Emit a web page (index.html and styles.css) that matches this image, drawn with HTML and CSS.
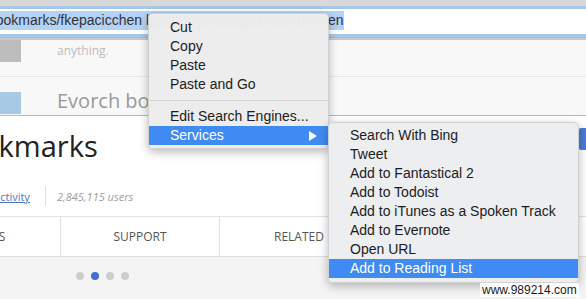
FILE: index.html
```html
<!DOCTYPE html>
<html>
<head>
<meta charset="utf-8">
<link rel="stylesheet" href="styles.css">
</head>
<body>
<div class="screen">
  <div class="toolbar">
    <div class="urlbar">
      <span class="url"><span class="sel">bookmarks/fkepacicchen<span class="url-hidden">bjecpbpbclokcabebhah?hl=</span>en</span></span>
    </div>
  </div>

  <div class="behind">
    <div class="row r1">
      <div class="thumb gray"></div>
      <div class="desc">anything.</div>
    </div>
    <div class="row r2">
      <div class="thumb blue"></div>
      <div class="rtitle">Evorch bookmarks</div>
    </div>
  </div>

  <div class="panel">
    <div class="title-row">
      <h1 class="title">Bookmarks</h1>
      <div class="add-btn"></div>
    </div>
    <div class="meta">
      <a class="cat">Productivity</a>
      <span class="vsep"></span>
      <span class="users">2,845,115 users</span>
    </div>
    <div class="tabs">
      <div class="tab">Reviews</div>
      <div class="tab">Support</div>
      <div class="tab">Related</div>
      <div class="tab"></div>
    </div>
    <div class="dots">
      <span class="dot"></span>
      <span class="dot on"></span>
      <span class="dot"></span>
      <span class="dot"></span>
    </div>
  </div>

  <div class="menu main-menu">
    <div class="item">Cut</div>
    <div class="item">Copy</div>
    <div class="item">Paste</div>
    <div class="item">Paste and Go</div>
    <div class="sep"></div>
    <div class="item">Edit Search Engines...</div>
    <div class="item active">Services<svg class="arrow" width="8" height="10" viewBox="0 0 8 10"><path d="M0 0 L8 5 L0 10 Z" fill="#fff"/></svg></div>
  </div>

  <div class="menu sub-menu">
    <div class="item">Search With Bing</div>
    <div class="item">Tweet</div>
    <div class="item">Add to Fantastical 2</div>
    <div class="item">Add to Todoist</div>
    <div class="item">Add to iTunes as a Spoken Track</div>
    <div class="item">Add to Evernote</div>
    <div class="item">Open URL</div>
    <div class="item active">Add to Reading List</div>
  </div>

  <div class="watermark">www.989214.com</div>
</div>
</body>
</html>
```

FILE: styles.css
```css
* { box-sizing: border-box; }
html, body {
  margin: 0;
  padding: 0;
  width: 586px;
  height: 299px;
  overflow: hidden;
  background: #ffffff;
}
.screen {
  position: relative;
  width: 586px;
  height: 299px;
  overflow: hidden;
  font-family: "Liberation Sans", Arial, sans-serif;
}

/* toolbar / address bar */
.toolbar {
  height: 40px;
  background: #d8d8d8;
  padding-top: 6px;
  border-bottom: 2px solid #c9c9c9;
}
.urlbar {
  height: 31px;
  background: #ffffff;
  border-top: 3px solid #a7c6ec;
  border-bottom: 3px solid #a7c6ec;
  box-shadow: 0 1px 0 #b8b8b8;
  padding-top: 2px;
  overflow: hidden;
  white-space: nowrap;
}
.url {
  display: block;
  margin-left: -12px;
  font-size: 14px;
  line-height: 19px;
  color: #333;
}
.sel {
  background: #b3d2f5;
  display: inline-block;
}
.url-hidden {
  display: inline-block;
  width: 186px;
  padding-left: 4px;
  overflow: hidden;
  vertical-align: top;
}

/* page behind the dialog */
.behind {
  height: 75px;
  overflow: hidden;
  background: #f8f8f8;
}
.row {
  display: flex;
  align-items: flex-start;
  border-bottom: 1px solid #e6e6e6;
}
.r1 { height: 37px; }
.r2 { height: 38px; padding-top: 15px; border-bottom: none; }
.thumb {
  width: 21px;
  height: 22px;
  flex: none;
}
.thumb.gray { background: #bcbcbc; }
.thumb.blue { background: #a7c9e6; }
.desc {
  margin-left: 36px;
  margin-top: 2px;
  font-family: "Open Sans", sans-serif;
  font-size: 12px;
  color: #bdbdbd;
}
.rtitle {
  margin-left: 36px;
  margin-top: -5px;
  font-family: "Open Sans", sans-serif;
  font-size: 20px;
  color: #9a9a9a;
  white-space: nowrap;
}

/* dialog panel */
.panel {
  background: #ffffff;
  border-top: 1px solid #b8b8b8;
  font-family: "Open Sans", sans-serif;
  height: 184px;
}
.title-row {
  display: flex;
  align-items: flex-start;
  height: 70px;
}
.title {
  margin: 10px 0 0 -55px;
  font-size: 29px;
  line-height: 40px;
  font-weight: 400;
  color: #222;
  white-space: nowrap;
}
.add-btn {
  flex: none;
  width: 100px;
  height: 22px;
  margin: 12px -93px 0 auto;
  background: #4b7bd4;
  border-radius: 2px;
}
.meta {
  display: flex;
  align-items: center;
  height: 20px;
  margin-left: -31px;
  margin-bottom: 10px;
  white-space: nowrap;
}
.cat {
  font-size: 11px;
  color: #4a78c4;
  text-decoration: underline;
}
.vsep {
  width: 1px;
  height: 20px;
  background: #e2e2e2;
  margin: 0 11px 0 15px;
}
.users {
  font-size: 11px;
  font-style: italic;
  color: #9d9d9d;
}
.tabs {
  display: flex;
  margin-left: -98px;
  height: 41px;
  border-top: 1px solid #e2e2e2;
  border-bottom: 1px solid #dedede;
}
.tab {
  flex: none;
  width: 159px;
  border-right: 1px solid #e2e2e2;
  display: flex;
  align-items: center;
  justify-content: center;
  font-size: 12px;
  text-transform: uppercase;
  color: #555;
}
.dots {
  background: #f4f4f4;
  height: 43px;
  display: flex;
  gap: 7px;
  padding: 15px 0 0 76px;
}
.dot {
  width: 8px;
  height: 8px;
  border-radius: 50%;
  background: #cdcdcd;
}
.dot.on { background: #3f72cf; }

/* context menus */
.menu {
  position: absolute;
  background: rgba(237, 237, 237, 0.98);
  border: 1px solid rgba(0, 0, 0, 0.12);
  border-radius: 5px;
  box-shadow: 0 3px 10px rgba(0, 0, 0, 0.28);
  font-family: "Liberation Sans", Arial, sans-serif;
  font-size: 14px;
  color: #1c1c1c;
}
.main-menu {
  left: 148px;
  top: 13px;
  width: 181px;
  padding: 4px 0 3px;
}
.sub-menu {
  left: 328px;
  top: 122px;
  width: 251px;
  padding: 3px 0 4px;
  background: rgba(236, 238, 240, 0.98);
}
.item {
  height: 19px;
  line-height: 19px;
  padding-left: 21px;
  display: flex;
  align-items: center;
  white-space: nowrap;
}
.item.active {
  background: #3f8af3;
  color: #ffffff;
}
.arrow {
  margin-left: auto;
  margin-right: 11px;
}
.sep {
  height: 1px;
  background: #d6d6d6;
  margin: 6px 0;
}

.watermark {
  position: absolute;
  left: 480px;
  top: 283px;
  font-family: "Liberation Sans", Arial, sans-serif;
  font-size: 12px;
  color: #1a1a1a;
  background: #ffffff;
  padding: 0 2px;
}
```
